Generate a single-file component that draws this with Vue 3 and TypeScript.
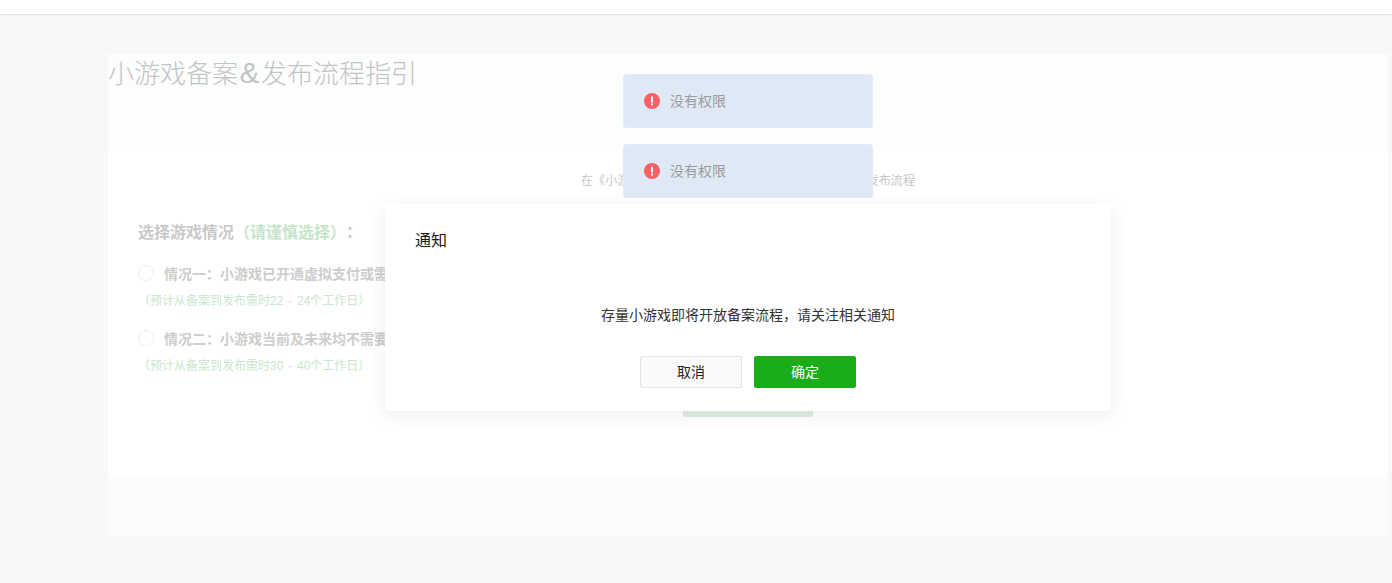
<template>
  <div class="page">
    <div class="topbar"></div>
    <main class="main">
      <header class="head">
        <h1 class="title">小游戏备案<span class="amp">&amp;</span>发布流程指引</h1>
      </header>
      <section class="card">
        <p class="intro">在《小游戏备案&amp;发布流程指引》中了解游戏的备案及发布流程</p>
        <h2 class="pick">选择游戏情况<em>（请谨慎选择）</em>：</h2>
        <div v-for="item in options" :key="item.label" class="option">
          <label class="option-row">
            <span class="radio"></span>
            <span class="option-label">{{ item.label }}</span>
          </label>
          <p class="option-hint">{{ item.hint }}</p>
        </div>
        <button class="next" type="button">下一步</button>
      </section>
      <div class="foot"></div>
    </main>

    <div class="toasts">
      <div v-for="n in 2" :key="n" class="toast">
        <svg class="toast-icon" viewBox="0 0 16 16" width="16" height="16">
          <circle cx="8" cy="8" r="8" fill="#fa5f63" />
          <rect x="7" y="3.5" width="2" height="6" fill="#fff" />
          <rect x="7" y="10.5" width="2" height="2" fill="#fff" />
        </svg>
        <span class="toast-text">没有权限</span>
      </div>
    </div>

    <div class="dialog">
      <div class="dialog-title">通知</div>
      <p class="dialog-body">存量小游戏即将开放备案流程，请关注相关通知</p>
      <div class="dialog-actions">
        <button class="btn" type="button">取消</button>
        <button class="btn primary" type="button">确定</button>
      </div>
    </div>
  </div>
</template>

<script setup lang="ts">
const options = [
  {
    label: '情况一：小游戏已开通虚拟支付或需要开通虚拟支付能力',
    hint: '（预计从备案到发布需时22 - 24个工作日）',
  },
  {
    label: '情况二：小游戏当前及未来均不需要开通虚拟支付能力',
    hint: '（预计从备案到发布需时30 - 40个工作日）',
  },
]
</script>

<style>
body {
  margin: 0;
  background: #f7f8fa;
}
</style>

<style scoped>
.page {
  position: relative;
  height: 583px;
  overflow: hidden;
  background: #f7f8fa;
  font-family: "Liberation Sans", "Noto Sans CJK SC", sans-serif;
  text-spacing-trim: space-all;
}
.topbar {
  height: 14px;
  background: #fff;
  border-bottom: 1px solid #e4e5e7;
  box-shadow: 0 1px 2px rgba(0, 0, 0, 0.03);
}
.main {
  margin: 39px 4px 0 108px;
}
.head {
  height: 96px;
  padding-top: 1px;
  box-sizing: border-box;
  background: #fcfdfd;
}
.title {
  margin: 0;
  font-size: 26px;
  font-weight: 300;
  line-height: 38px;
  color: #c3c4c4;
}
.amp {
  margin: 0 1.5px;
  font-size: 30px;
  line-height: 30px;
}
.card {
  box-sizing: border-box;
  height: 327px;
  padding: 23px 30px 0;
  background: #fff;
  border-radius: 0 0 4px 4px;
  box-shadow: 0 1px 2px rgba(0, 0, 0, 0.02);
  text-align: left;
}
.intro {
  margin: 0 0 32px;
  font-size: 12px;
  line-height: 16px;
  letter-spacing: 0.07px;
  text-align: center;
  color: #c6c6c6;
}
.pick {
  margin: 0 0 18px;
  font-size: 16px;
  line-height: 24px;
  font-weight: 700;
  color: #c9c9c9;
}
.pick em {
  font-style: normal;
  color: #c5e4c8;
}
.option + .option {
  margin-top: 19px;
}
.option-row {
  display: flex;
  align-items: center;
  gap: 10px;
  height: 20px;
}
.radio {
  box-sizing: border-box;
  width: 16px;
  height: 16px;
  border: 1px solid #eeeeee;
  border-radius: 50%;
}
.option-label {
  font-size: 14px;
  font-weight: 700;
  color: #cdcdcd;
  white-space: nowrap;
}
.option-hint {
  margin: 10px 0 0;
  font-size: 12px;
  line-height: 16px;
  word-spacing: 1.5px;
  color: #c9e6cb;
}
.next {
  display: block;
  width: 130px;
  height: 32px;
  margin: 11px auto 0;
  padding: 0;
  border: 0;
  border-radius: 2px;
  background: #dfeee2;
  color: #fff;
  font: inherit;
  font-size: 14px;
}
.foot {
  height: 60px;
  background: #fbfcfc;
}
.toasts {
  position: absolute;
  top: 74px;
  left: 623px;
  display: flex;
  flex-direction: column;
  gap: 16px;
  width: 250px;
}
.toast {
  box-sizing: border-box;
  display: flex;
  align-items: center;
  gap: 10px;
  height: 54px;
  padding: 0 20px;
  background: #dfe8f5;
  border: 1px solid #e4ebf7;
  border-radius: 3px;
  font-size: 14px;
  color: #9b9b9b;
}
.toast-text {
  padding-bottom: 2px;
}
.toast-icon {
  flex: none;
}
.dialog {
  position: absolute;
  top: 204px;
  left: 385px;
  box-sizing: border-box;
  width: 726px;
  height: 207px;
  padding: 27px 30px 0;
  background: #fff;
  border-radius: 4px;
  box-shadow: 0 4px 20px rgba(0, 0, 0, 0.07);
}
.dialog-title {
  font-size: 16px;
  line-height: 20px;
  color: #1a1a1a;
}
.dialog-body {
  margin: 54px 0 0;
  font-size: 14px;
  line-height: 20px;
  text-align: center;
  color: #333;
}
.dialog-actions {
  display: flex;
  justify-content: center;
  gap: 12px;
  margin-top: 31px;
}
.btn {
  box-sizing: border-box;
  width: 102px;
  height: 32px;
  padding: 0 0 2px;
  background: #fafafa;
  border: 1px solid #e5e5e5;
  border-radius: 2px;
  color: #222;
  font: inherit;
  font-size: 14px;
}
.btn.primary {
  background: #1aad19;
  border-color: #1aad19;
  color: #fff;
}
</style>
